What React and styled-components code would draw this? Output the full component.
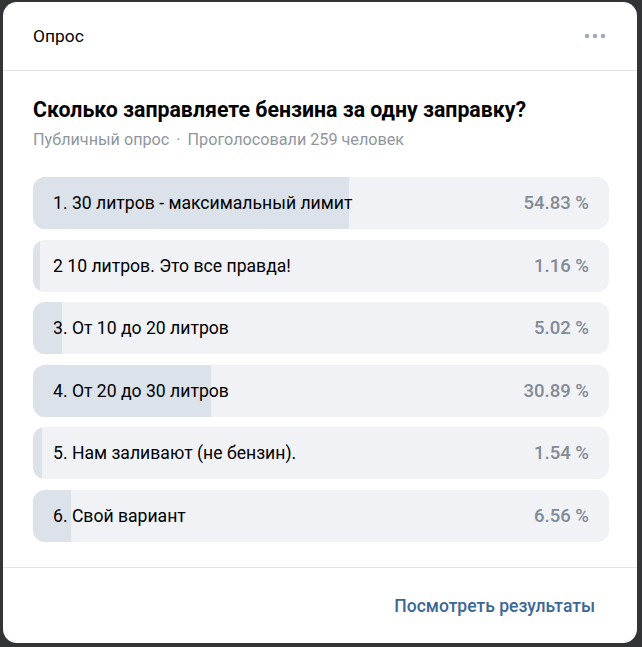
import React from 'react';
import styled, { createGlobalStyle } from 'styled-components';

const GlobalStyle = createGlobalStyle`
  html, body {
    margin: 0;
    padding: 0;
    background: #333435;
  }
  body {
    font-family: Roboto, 'Liberation Sans', sans-serif;
    -webkit-font-smoothing: antialiased;
  }
`;

const Page = styled.div`
  width: 642px;
  height: 647px;
  padding: 2px 5px 4px 3px;
  box-sizing: border-box;
`;

const Modal = styled.div`
  height: 100%;
  background: #fff;
  border-radius: 14px;
  display: flex;
  flex-direction: column;
  overflow: hidden;
`;

const Header = styled.div`
  height: 68px;
  display: flex;
  align-items: center;
  justify-content: space-between;
  padding: 0 31px 0 30px;
  border-bottom: 1px solid #e3e4e8;
  flex-shrink: 0;
`;

const HeaderTitle = styled.span`
  font-size: 17.4px;
  color: #000;
`;

const MoreButton = styled.button`
  border: 0;
  background: none;
  padding: 0;
  display: flex;
  cursor: pointer;
`;

const Body = styled.div`
  flex: 1;
  padding: 26px 28px 25px 30px;
  border-bottom: 1px solid #e3e4e8;
`;

const Question = styled.h2`
  margin: 0;
  font-size: 21.3px;
  line-height: 26px;
  font-weight: 700;
  color: #000;
`;

const Meta = styled.div`
  margin-top: 7px;
  font-size: 16.2px;
  line-height: 20px;
  color: #8f969e;
`;

const MetaDot = styled.span`
  margin: 0 7px;
`;

const Options = styled.div`
  margin-top: 27px;
  display: flex;
  flex-direction: column;
  gap: 10.6px;
`;

const Option = styled.div`
  position: relative;
  height: 52px;
  border-radius: 12px;
  background: #f0f2f5;
  overflow: hidden;
  display: flex;
  align-items: center;
  justify-content: space-between;
  padding: 0 20px;
`;

const Fill = styled.div`
  position: absolute;
  left: 0;
  top: 0;
  bottom: 0;
  background: #dce2ea;
`;

const Label = styled.span`
  position: relative;
  font-size: 17.6px;
  color: #000;
`;

const Percent = styled.span`
  position: relative;
  font-size: 18.5px;
  font-weight: 500;
  color: #828b96;
`;

const Footer = styled.div`
  height: 75px;
  display: flex;
  align-items: center;
  justify-content: flex-end;
  padding-right: 42px;
  flex-shrink: 0;
`;

const ResultsLink = styled.a`
  font-size: 17.5px;
  font-weight: 500;
  color: #3b6797;
  text-decoration: none;
  cursor: pointer;
`;

const answers = [
  { text: '1. 30 литров - максимальный лимит', pct: 54.83 },
  { text: '2 10 литров. Это все правда!', pct: 1.16 },
  { text: '3. От 10 до 20 литров', pct: 5.02 },
  { text: '4. От 20 до 30 литров', pct: 30.89 },
  { text: '5. Нам заливают (не бензин).', pct: 1.54 },
  { text: '6. Свой вариант', pct: 6.56 },
];

const DotsIcon = () => (
  <svg width="22" height="6" viewBox="0 0 22 6">
    <circle cx="3" cy="3" r="2.3" fill="#a3a9b1" />
    <circle cx="11" cy="3" r="2.3" fill="#a3a9b1" />
    <circle cx="19" cy="3" r="2.3" fill="#a3a9b1" />
  </svg>
);

const App = () => (
  <>
    <GlobalStyle />
    <Page>
      <Modal>
        <Header>
          <HeaderTitle>Опрос</HeaderTitle>
          <MoreButton>
            <DotsIcon />
          </MoreButton>
        </Header>
        <Body>
          <Question>Сколько заправляете бензина за одну заправку?</Question>
          <Meta>
            Публичный опрос<MetaDot>·</MetaDot>Проголосовали 259 человек
          </Meta>
          <Options>
            {answers.map((a) => (
              <Option key={a.text}>
                <Fill style={{ width: `${a.pct}%` }} />
                <Label>{a.text}</Label>
                <Percent>{a.pct.toFixed(2)} %</Percent>
              </Option>
            ))}
          </Options>
        </Body>
        <Footer>
          <ResultsLink>Посмотреть результаты</ResultsLink>
        </Footer>
      </Modal>
    </Page>
  </>
);

export default App;
